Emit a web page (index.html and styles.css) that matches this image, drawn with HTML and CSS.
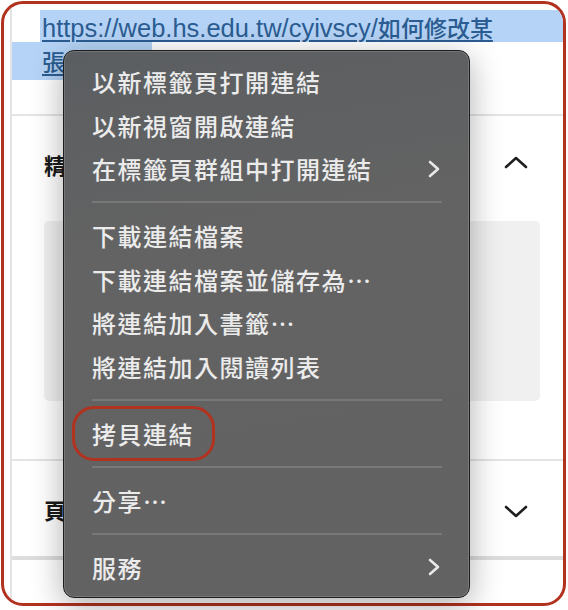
FILE: index.html
```html
<!DOCTYPE html>
<html lang="zh-Hant">
<head>
<meta charset="utf-8">
<title>Context menu</title>
<link rel="stylesheet" href="styles.css">
</head>
<body>
<div class="frame">
  <div class="page">
    <div class="url">
      <div class="sel sel-1"><a class="link" href="#">https://web.hs.edu.tw/cyivscy/<span class="cjk">如何修改某</span></a></div>
      <div class="sel sel-2"><a class="link cjk" href="#">張</a></div>
    </div>
    <div class="rule"></div>
    <section class="sec sec-open">
      <div class="sec-head">
        <span class="sec-title">精</span>
        <svg class="chev" width="24" height="14" viewBox="0 0 24 14"><polyline points="2,12 12,3 22,12" fill="none" stroke="#1f1f1f" stroke-width="2.6" stroke-linecap="round" stroke-linejoin="round"/></svg>
      </div>
      <div class="panel"></div>
    </section>
    <div class="rule"></div>
    <section class="sec">
      <div class="sec-head sec-head-closed">
        <span class="sec-title">頁</span>
        <svg class="chev" width="24" height="14" viewBox="0 0 24 14"><polyline points="2,3 12,12 22,3" fill="none" stroke="#1f1f1f" stroke-width="2.6" stroke-linecap="round" stroke-linejoin="round"/></svg>
      </div>
    </section>
    <div class="rule rule-thick"></div>
  </div>
</div>

<div class="menu">
  <div class="item">以新標籤頁打開連結</div>
  <div class="item">以新視窗開啟連結</div>
  <div class="item"><span>在標籤頁群組中打開連結</span><svg class="sub" width="12" height="18" viewBox="0 0 12 18"><polyline points="2,2 10,9 2,16" fill="none" stroke="#e8e8e8" stroke-width="2.6" stroke-linecap="round" stroke-linejoin="round"/></svg></div>
  <div class="sep"></div>
  <div class="item">下載連結檔案</div>
  <div class="item">下載連結檔案並儲存為⋯</div>
  <div class="item">將連結加入書籤⋯</div>
  <div class="item">將連結加入閱讀列表</div>
  <div class="sep"></div>
  <div class="item item-marked">拷貝連結</div>
  <div class="sep"></div>
  <div class="item">分享⋯</div>
  <div class="sep"></div>
  <div class="item"><span>服務</span><svg class="sub" width="12" height="18" viewBox="0 0 12 18"><polyline points="2,2 10,9 2,16" fill="none" stroke="#e8e8e8" stroke-width="2.6" stroke-linecap="round" stroke-linejoin="round"/></svg></div>
</div>
</body>
</html>
```

FILE: styles.css
```css
html, body {
  margin: 0;
  padding: 0;
  background: #ffffff;
}

body {
  width: 568px;
  height: 610px;
  position: relative;
  overflow: hidden;
  font-family: "Liberation Sans", "Noto Sans CJK TC", sans-serif;
}

.frame {
  box-sizing: border-box;
  width: 565px;
  height: 605px;
  margin: 1px 0 0 1px;
  border: 3.5px solid #b23220;
  border-radius: 22px;
  overflow: hidden;
  background: #ffffff;
}

.page {
  margin-left: 6px;
  height: 100%;
  border-left: 2px solid #e3e3e3;
  display: flex;
  flex-direction: column;
}

.url {
  padding-top: 6px;
  padding-bottom: 34px;
}

.sel {
  background: #b5d3f6;
}

.sel-1 {
  margin-left: 28px;
  height: 32px;
  line-height: 34px;
  padding-left: 2px;
}

.sel-2 {
  width: 140px;
  height: 38px;
  line-height: 38px;
  padding-left: 30px;
  box-sizing: border-box;
}

.link {
  font-size: 25.5px;
  color: #2b5d92;
  text-decoration: underline;
  text-decoration-thickness: 2px;
  text-underline-offset: 3px;
  white-space: nowrap;
}

.cjk {
  font-family: "Noto Sans CJK TC", sans-serif;
  font-size: 23px;
  font-weight: 500;
}

.rule {
  height: 2px;
  background: #e4e4e4;
  flex: none;
}

.rule-thick {
  height: 4px;
  background: #dddddd;
}

.sec-head {
  height: 96px;
  display: flex;
  align-items: center;
  justify-content: space-between;
  padding: 0 35px 0 32px;
}

.sec-head-closed {
  height: 95px;
}

.sec-title {
  font-family: "Noto Sans CJK TC", sans-serif;
  font-weight: 700;
  font-size: 22px;
  color: #1a1a1a;
}

.chev {
  margin-top: -4px;
}

.sec-head-closed .chev {
  margin-top: 4px;
}

.panel {
  margin: 9px 23px 58px 32px;
  height: 180px;
  border-radius: 5px;
  background: #f0f0f0;
}

.menu {
  position: absolute;
  left: 63px;
  top: 50px;
  width: 407px;
  height: 548px;
  box-sizing: border-box;
  padding: 9px 0;
  border: 1px solid #1d1d1d;
  border-radius: 11px;
  background: linear-gradient(170deg, #5b5e61 0%, #636363 35%, #626262 100%);
  box-shadow: inset 0 0 0 1px rgba(255, 255, 255, 0.14), 0 8px 32px rgba(0, 0, 0, 0.32);
  font-family: "Noto Sans CJK TC", sans-serif;
  font-size: 24px;
  font-weight: 500;
  letter-spacing: 1.5px;
  color: #ebebeb;
}

.item {
  height: 43.5px;
  display: flex;
  align-items: center;
  justify-content: space-between;
  padding: 0 29px 0 28px;
  white-space: nowrap;
}

.sub {
  flex: none;
}

.sep {
  height: 2px;
  margin: 10.5px 27px 11px 28px;
  background: #787878;
}

.item-marked {
  position: relative;
}

.item-marked::before {
  content: "";
  position: absolute;
  left: 8px;
  top: -6px;
  width: 143px;
  height: 55px;
  box-sizing: border-box;
  border: 3.5px solid #b23220;
  border-radius: 22px;
}
```
